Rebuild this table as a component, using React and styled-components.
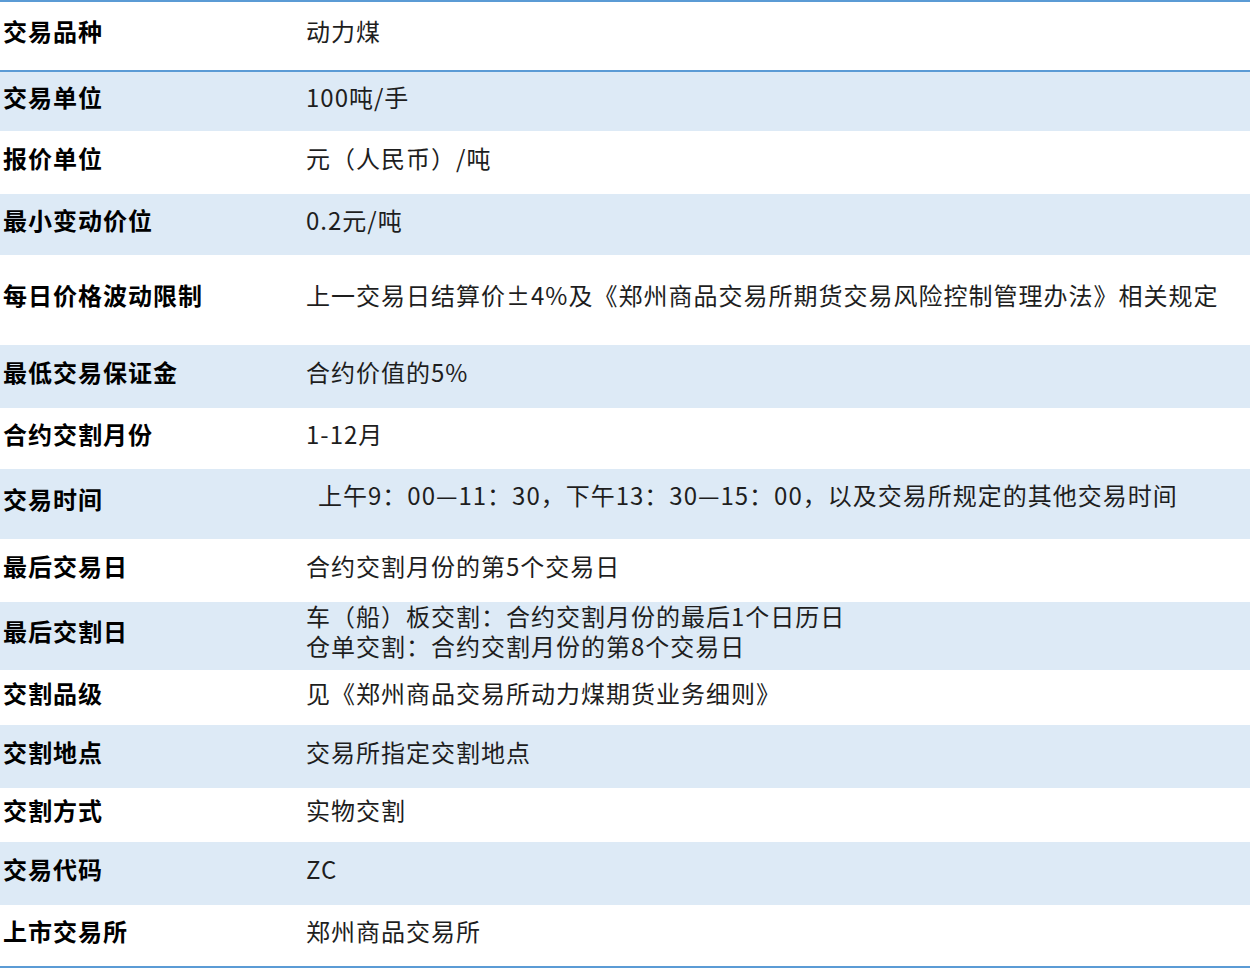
import styled, { createGlobalStyle } from 'styled-components'

const GlobalStyle = createGlobalStyle`
	html, body {
		margin: 0;
		padding: 0;
		background: #ffffff;
	}

	body {
		font-family: 'Noto Sans CJK SC', 'Noto Sans', sans-serif;
	}
`

const rows = [
	{ label: '交易品种', value: ['动力煤'], height: 68, divider: true },
	{ label: '交易单位', value: ['100吨/手'], height: 59 },
	{ label: '报价单位', value: ['元（人民币）/吨'], height: 63 },
	{ label: '最小变动价位', value: ['0.2元/吨'], height: 61 },
	{
		label: '每日价格波动限制',
		value: ['上一交易日结算价±4%及《郑州商品交易所期货交易风险控制管理办法》相关规定'],
		height: 90,
	},
	{ label: '最低交易保证金', value: ['合约价值的5%'], height: 63 },
	{ label: '合约交割月份', value: ['1-12月'], height: 61 },
	{
		label: '交易时间',
		value: ['上午9：00—11：30，下午13：30—15：00，以及交易所规定的其他交易时间'],
		height: 70,
		indent: 12,
		lift: 8,
	},
	{ label: '最后交易日', value: ['合约交割月份的第5个交易日'], height: 63 },
	{
		label: '最后交割日',
		value: ['车（船）板交割：合约交割月份的最后1个日历日', '仓单交割：合约交割月份的第8个交易日'],
		height: 68,
	},
	{ label: '交割品级', value: ['见《郑州商品交易所动力煤期货业务细则》'], height: 55 },
	{ label: '交割地点', value: ['交易所指定交割地点'], height: 63 },
	{ label: '交割方式', value: ['实物交割'], height: 54 },
	{ label: '交易代码', value: ['ZC'], height: 63 },
	{ label: '上市交易所', value: ['郑州商品交易所'], height: 61 },
]

const Table = styled.div`
	width: 1250px;
	border-top: 2px solid #5b9bd5;
	border-bottom: 2px solid #5b9bd5;
`

const Row = styled.div`
	display: flex;
	align-items: center;
	box-sizing: content-box;
	height: ${(props) => props.$height - 10}px;
	padding-bottom: 10px;
	background-color: ${(props) => (props.$shaded ? '#ddeaf6' : '#ffffff')};
	border-bottom: ${(props) => (props.$divider ? '2px solid #5b9bd5' : 'none')};
`

const Label = styled.div`
	width: 303px;
	padding-left: 3px;
	flex-shrink: 0;
	font-size: 24px;
	font-weight: 700;
	letter-spacing: 1px;
	color: #000000;
	line-height: 30px;
`

const Value = styled.div`
	padding-left: ${(props) => props.$indent || 0}px;
	margin-bottom: ${(props) => props.$lift || 0}px;
	font-size: 24px;
	letter-spacing: 1px;
	color: #1e1e1e;
	line-height: 30px;
	white-space: nowrap;
`

export default function App() {
	return (
		<>
			<GlobalStyle />
			<Table>
				{rows.map((row, i) => (
					<Row key={row.label} $height={row.height} $shaded={i % 2 === 1} $divider={row.divider}>
						<Label>{row.label}</Label>
						<Value $indent={row.indent} $lift={row.lift}>
							{row.value.map((line) => (
								<div key={line}>{line}</div>
							))}
						</Value>
					</Row>
				))}
			</Table>
		</>
	)
}
